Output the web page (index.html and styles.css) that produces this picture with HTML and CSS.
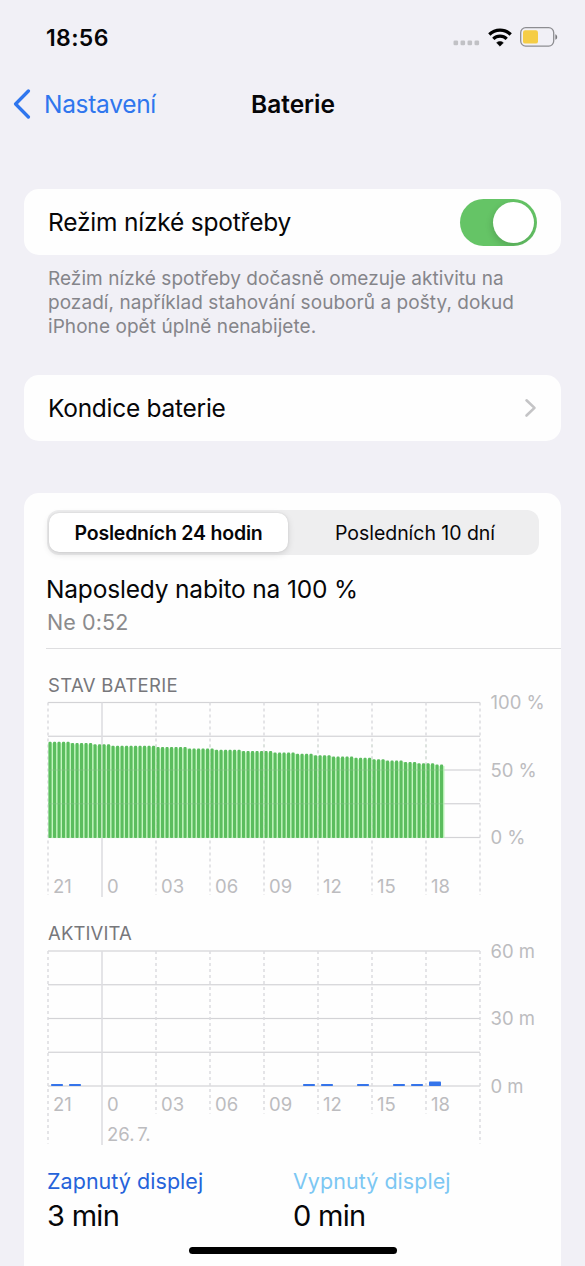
FILE: index.html
```html
<!DOCTYPE html>
<html lang="cs">
<head>
<meta charset="utf-8">
<title>Baterie</title>
<link rel="stylesheet" href="styles.css">
</head>
<body>
<div class="screen">
  <header class="status">
    <span class="time">18:56</span>
    <div class="status-icons">
      <svg class="dots" width="28" height="6" viewBox="0 0 28 6"><g fill="#c1c1c5"><rect x="0.5" y="0.5" width="4.6" height="4.8" rx="1.3"/><rect x="7.5" y="0.5" width="4.6" height="4.8" rx="1.3"/><rect x="14.5" y="0.5" width="4.6" height="4.8" rx="1.3"/><rect x="21.5" y="0.5" width="4.6" height="4.8" rx="1.3"/></g></svg>
      <svg class="wifi" width="24" height="19" viewBox="0 0 24 19"><g fill="none" stroke="#000" stroke-width="3.2"><path d="M1.300 6.500a15.200 15.200 0 0 1 21.400 0"/><path d="M5.300 10.900a9.500 9.500 0 0 1 13.400 0"/></g><path d="M12 18.200l-3.400-3.400a4.900 4.900 0 0 1 6.800 0z" stroke="#000" stroke-width="0.5" stroke-linejoin="round"/></svg>
      <svg class="cell" width="38" height="20" viewBox="0 0 38 20"><rect x="0.7" y="0.7" width="33" height="18.4" rx="5" fill="none" stroke="#8d8d91" stroke-width="1.3"/><rect x="3" y="3.2" width="15" height="13.4" rx="2.2" fill="#f5cd46"/><path d="M35.4 7.2c2.4 1 2.4 4.600 0 5.600z" fill="#77777b"/></svg>
    </div>
  </header>
  <nav class="nav">
    <div class="back"><svg width="18" height="30" viewBox="0 0 18 30"><path d="M15.400 2L2.600 15l12.800 13" fill="none" stroke="#2f76ee" stroke-width="3.300" stroke-linecap="round" stroke-linejoin="round"/></svg><span>Nastavení</span></div>
    <h1 class="title">Baterie</h1>
  </nav>
  <main>
    <section class="card row"><span class="t-row1">Režim nízké spotřeby</span><div class="switch"><div class="knob"></div></div></section>
    <p class="note">Režim nízké spotřeby dočasně omezuje aktivitu na<br>pozadí, například stahování souborů a pošty, dokud<br>iPhone opět úplně nenabijete.</p>
    <section class="card row second"><span class="t-row2">Kondice baterie</span><svg class="chev" width="14" height="20" viewBox="0 0 14 20"><path d="M3.500 2.300l8 7.600-8 7.600" fill="none" stroke="#c4c4c6" stroke-width="2.600" stroke-linecap="round" stroke-linejoin="round"/></svg></section>
    <section class="card usage">
      <div class="segments"><div class="seg active"><span>Posledních 24 hodin</span></div><div class="seg other"><span>Posledních 10 dní</span></div></div>
      <div class="charged">Naposledy nabito na 100 %</div>
      <div class="when">Ne 0:52</div>
      <div class="divider"></div>
      <h2 class="caption cap1">STAV BATERIE</h2>
      <svg class="chart" id="level" width="537" height="204" viewBox="0 0 537 204"></svg>
      <h2 class="caption cap2">AKTIVITA</h2>
      <svg class="chart" id="activity" width="537" height="204" viewBox="0 0 537 204"></svg>
      <div class="totals">
        <div class="total"><span class="on">Zapnutý displej</span><b>3 min</b></div>
        <div class="total"><span class="off">Vypnutý displej</span><b>0 min</b></div>
      </div>
    </section>
  </main>
  <div class="home"></div>
</div>
<script src="charts.js"></script>
</body>
</html>
```
FILE: styles.css
```css
* { box-sizing: border-box; }
body { margin: 0; background: #f1f0f6; font-family: Inter, "Liberation Sans", sans-serif; color: #060608; }
.screen { position: relative; width: 585px; height: 1266px; overflow: hidden; }
.status { height: 74px; padding: 0 27px 0 46px; display: flex; align-items: center; justify-content: space-between; }
.time { font-size: 23px; font-weight: 600; letter-spacing: 0.35px; line-height: 28px; padding-top: 1px; }
.status-icons { display: flex; align-items: center; }
.dots { margin: 12px 7px 0 0; }
.wifi { margin-right: 8px; }
.nav { height: 60px; padding: 0 12px 0 13px; display: grid; grid-template-columns: 1fr auto 1fr; align-items: center; }
.back { display: flex; align-items: center; gap: 13px; color: #2f76ee; font-size: 24.5px; letter-spacing: -0.3px; margin-top: -1px; }
.title { margin: -1px 0 0; font-size: 24.5px; font-weight: 600; letter-spacing: 0; }
main { padding: 55px 24px 0; }
.card { background: #fefefe; border-radius: 15px; width: 537px; }
.row { height: 66px; padding: 0 24px; display: flex; align-items: center; justify-content: space-between; font-size: 24.5px; }
.t-row1 { letter-spacing: -0.2px; }
.t-row2 { letter-spacing: -0.27px; }
.switch { width: 77px; height: 47px; border-radius: 24px; background: #65c466; padding: 3px; display: flex; justify-content: flex-end; }
.knob { width: 41px; height: 41px; border-radius: 50%; background: #fff; box-shadow: -1px 3px 7px rgba(0,0,0,.15); }
.switch { overflow: hidden; }
.note { margin: 12px 24px 0; font-size: 19px; line-height: 24px; letter-spacing: 0.06px; color: #85858a; white-space: nowrap; }
.second { margin-top: 36px; }
.usage { margin-top: 52px; height: 800px; padding-top: 17px; }
.segments { margin: 0 22px 0 23px; height: 45px; padding: 3px 2px; border-radius: 12px; background: #eeeeef; display: grid; grid-template-columns: 239px 1fr; font-size: 19.5px; }
.seg { display: flex; align-items: center; justify-content: center; }
.active { background: #fff; border-radius: 10px; font-weight: 600; letter-spacing: -0.2px; box-shadow: 0 2px 7px rgba(0,0,0,.13), 0 0 2px rgba(0,0,0,.1); }
.other { padding-left: 5px; letter-spacing: -0.04px; }
.charged { margin: 19px 22px 0; font-size: 24.5px; line-height: 30px; letter-spacing: -0.18px; }
.when { margin: 5px 23px 0; font-size: 21.5px; line-height: 26px; letter-spacing: 0.1px; color: #8b8b8d; }
.divider { margin: 13px 0 0 22px; height: 1px; background: #dedee0; }
.caption { margin: 24px 24px 0; font-size: 18.5px; line-height: 24px; font-weight: 400; color: #77777b; }
.cap1 { letter-spacing: 0.33px; }
.cap2 { margin-top: 20px; letter-spacing: 0.12px; }
.chart { display: block; overflow: visible; }
.chart text { font-size: 18.5px; fill: #bcbcbf; }
.chart .date { word-spacing: -2.500px; }
.totals { padding: 18px 23px 0; display: grid; grid-template-columns: 246px 1fr; }
.total { display: flex; flex-direction: column; }
.total span { font-size: 21.5px; line-height: 28px; letter-spacing: 0.04px; }
.on { color: #2563da; }
.off { color: #7cc7f3; }
.total b { font-size: 29px; line-height: 42px; font-weight: 400; letter-spacing: -0.7px; }
.home { position: absolute; left: 189px; top: 1247px; width: 208px; height: 7px; border-radius: 4px; background: #000; }
```
FILE: charts.js
```js
const NS = "http://www.w3.org/2000/svg";
function add(parent, name, attrs, text) {
  const el = document.createElementNS(NS, name);
  for (const key in attrs) el.setAttribute(key, attrs[key]);
  if (text) el.textContent = text;
  parent.appendChild(el);
}
const hours = ["21", "0", "03", "06", "09", "12", "15", "18"];
const LEFT = 24, STEP = 54, ROW = 33.75;

function grid(svg, top, ends, labelY) {
  for (let i = 0; i < 5; i++)
    add(svg, "rect", { x: LEFT, y: top - 0.6 + i * ROW, width: 432, height: 1.2, fill: "#d3d3d6" });
  for (let i = 0; i < 9; i++) {
    const x = LEFT + i * STEP;
    if (i === 1) add(svg, "line", { x1: x, x2: x, y1: top, y2: ends.solid, stroke: "#dedee1", "stroke-width": 1.6 });
    else add(svg, "line", { x1: x, x2: x, y1: top, y2: i % 8 ? ends.inner : ends.outer, stroke: "#dcdcdf", "stroke-width": 1.5, "stroke-dasharray": "3 3" });
  }
  hours.forEach((h, i) => add(svg, "text", { x: LEFT + i * STEP + 5, y: labelY }, h));
}
function scale(svg, top, labels) {
  labels.forEach((t, i) => add(svg, "text", { x: 466.5, y: top + 6.7 + i * 67.5 }, t));
}

const level = document.getElementById("level");
grid(level, 5.5, { solid: 200, inner: 198, outer: 198 }, 195.5);
scale(level, 5.5, ["100 %", "50 %", "0 %"]);
const runs = [[71,5],[70,5],[69,4],[68,10],[67,7],[66,6],[65,6],[64,7],[63,5],[62,4],[61,4],[60,5],[59,4],[58,3],[57,4],[56,3],[55,4],[54,2]];
let n = 0;
for (const [pct, count] of runs) {
  for (let i = 0; i < count; i++, n++) {
    const h = pct * 1.35, x = LEFT + 0.5 + n * 4.5;
    add(level, "rect", { x: x, y: 142 - h, width: 4.5, height: h - 1, fill: "#b7f3b3", opacity: 0.85 });
    add(level, "rect", { x: x, y: 140.5 - h, width: 3.1, height: h + 0.5, rx: 1, fill: "#5bbd5e" });
  }
}
for (let i = 1; i < 8; i++)
  add(level, "line", { x1: LEFT + i * STEP, x2: LEFT + i * STEP, y1: 47, y2: 140, stroke: "#c9dcc9", "stroke-opacity": 0.35, "stroke-width": 1.5, "stroke-dasharray": i === 1 ? "none" : "3 3" });
for (const y of [73, 106.75])
  add(level, "rect", { x: LEFT, y: y - 0.6, width: 395, height: 1.2, fill: "#8fc492", opacity: 0.35 });

const activity = document.getElementById("activity");
grid(activity, 6, { solid: 200, inner: 168.5, outer: 198.5 }, 166);
scale(activity, 6, ["60 m", "30 m", "0 m"]);
add(activity, "text", { x: 83, y: 196, class: "date" }, "26. 7.");
for (const [slot, h] of [[0,2],[1,2],[14,2],[15,2],[17,2],[19,2],[20,2],[21,4.500]])
  add(activity, "rect", { x: LEFT + 3 + slot * 18, y: 141 - h, width: 12, height: h, rx: 0.8, fill: "#3574ea" });
```
